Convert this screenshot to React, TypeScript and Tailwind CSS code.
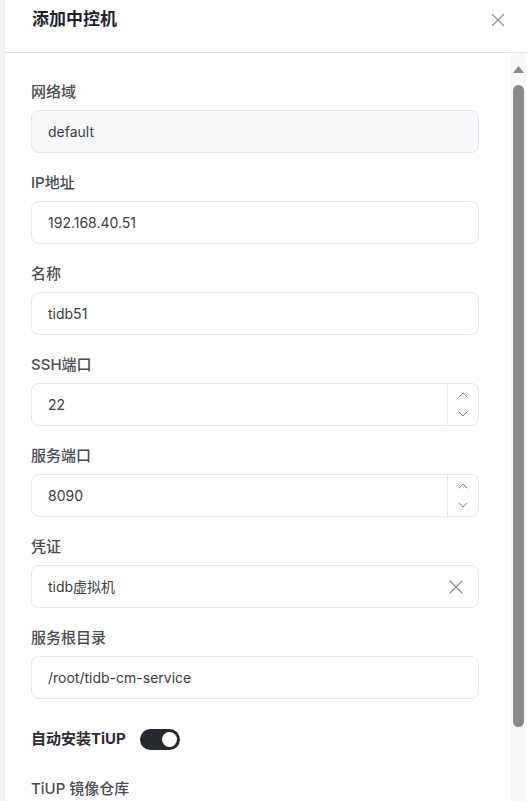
import React from "react";
import { X, ChevronUp, ChevronDown } from "lucide-react";

const font = { fontFamily: 'Inter, "Noto Sans CJK SC", sans-serif' };

function Label({ children }: { children: React.ReactNode }) {
  return (
    <div className="h-5 flex items-center text-[15px] font-medium text-[#4a4d52] leading-5">
      {children}
    </div>
  );
}

function Field({
  label,
  value,
  disabled,
  spinner,
  clear,
}: {
  label: string;
  value: string;
  disabled?: boolean;
  spinner?: boolean;
  clear?: boolean;
}) {
  return (
    <div className="flex flex-col gap-2 shrink-0">
      <Label>{label}</Label>
      <div
        className={`h-[43px] w-[448px] rounded-lg border border-[#e3e7ec] flex items-center ${
          disabled ? "bg-[#f7f8fa]" : "bg-white"
        }`}
      >
        <div className="flex-1 pl-4 text-[14px] text-[#3a3d42]">{value}</div>
        {spinner && (
          <div className="h-full w-[31px] border-l border-[#e3e7ec] flex flex-col items-center justify-between py-[3px] text-[#7a7e85]">
            <ChevronUp size={16} strokeWidth={1.5} />
            <ChevronDown size={16} strokeWidth={1.5} />
          </div>
        )}
        {clear && (
          <div className="pr-[10px] text-[#8a8e95] flex items-center">
            <X size={24} strokeWidth={1.2} />
          </div>
        )}
      </div>
    </div>
  );
}

export default function App() {
  return (
    <div className="h-[801px] w-[528px] bg-[#f2f3f5] flex overflow-hidden" style={font}>
      <div className="ml-[5px] flex-1 bg-white flex flex-col">
        <div className="h-[53px] border-b border-[#dfe5ec] flex items-start justify-between pt-2 pl-[27px] pr-[19px] shrink-0">
          <div className="h-6 flex items-center text-[17px] font-bold text-[#1f2329]">添加中控机</div>
          <div className="h-6 flex items-center text-[#8a8e95]">
            <X size={22} strokeWidth={1.3} />
          </div>
        </div>
        <div className="flex-1 flex overflow-hidden">
          <div className="flex-1 pl-[26px] pt-[29px] flex flex-col gap-5">
            <Field label="网络域" value="default" disabled />
            <Field label="IP地址" value="192.168.40.51" />
            <Field label="名称" value="tidb51" />
            <Field label="SSH端口" value="22" spinner />
            <Field label="服务端口" value="8090" spinner />
            <Field label="凭证" value="tidb虚拟机" clear />
            <Field label="服务根目录" value="/root/tidb-cm-service" />
            <div className="h-10 shrink-0 flex items-center gap-[14px]">
              <span className="text-[15px] font-bold text-[#2b2e33]">自动安装TiUP</span>
              <div className="w-10 h-[21px] rounded-full bg-[#25292d] flex items-center justify-end pr-[3px]">
                <div className="w-[15px] h-[15px] rounded-full bg-white" />
              </div>
            </div>
            <div className="shrink-0">
              <Label>TiUP 镜像仓库</Label>
            </div>
          </div>
          <div className="w-[15px] mr-[2px] bg-[#f8f8f8] flex flex-col items-center pt-[13px]">
            <svg width="11" height="7" viewBox="0 0 11 7">
              <path d="M5.5 0 L11 7 L0 7 Z" fill="#8a8a8a" />
            </svg>
            <div className="mt-[12px] w-[11px] h-[642px] rounded-full bg-[#8a8a8a]" />
          </div>
        </div>
      </div>
    </div>
  );
}
